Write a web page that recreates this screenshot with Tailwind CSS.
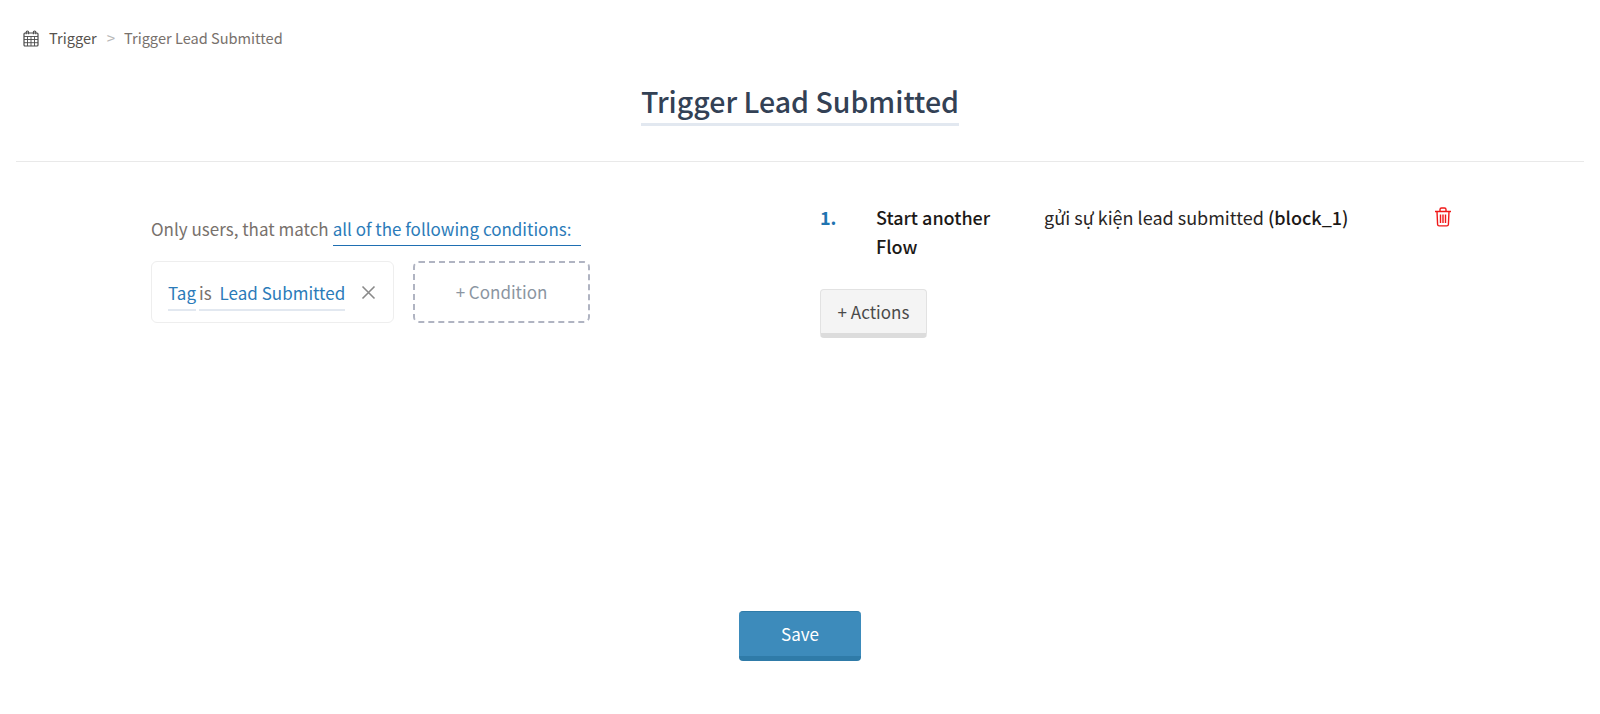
<!DOCTYPE html>
<html lang="en">
<head>
    <meta charset="UTF-8">
    <title>Trigger Lead Submitted</title>
    <script src="https://cdn.jsdelivr.net/npm/@tailwindcss/browser@4"></script>
</head>
<body class="bg-white font-['Noto_Sans_CJK_SC','Noto_Sans',sans-serif]">
    <div class="h-[714px] flex flex-col px-4 overflow-hidden">
        <!-- breadcrumb -->
        <div class="flex items-center h-[24px] mt-[26px] pl-[7px] text-[14.6px]">
            <svg class="w-[16px] h-[17px]" viewBox="0 0 16 17" fill="none" stroke="#4b4b4b" stroke-width="1.2">
                <rect x="1" y="3" width="14" height="13" rx="1"/>
                <path d="M1 6.5h14M1 9.5h14M1 12.7h14M4.5 6.5V16M8 6.5V16M11.5 6.5V16" stroke-width="0.9"/>
                <path d="M3.2 4.2V2.2a1.2 1.2 0 0 1 2.4 0v2M10.4 4.2V2.2a1.2 1.2 0 0 1 2.4 0v2" stroke-width="1.1"/>
            </svg>
            <span class="ml-[10px] text-[#57534e]">Trigger</span>
            <span class="ml-[10px] text-[#b8b8b8] text-[15px]">&gt;</span>
            <span class="ml-[9px] text-[#78716c]">Trigger Lead Submitted</span>
        </div>

        <!-- title -->
        <div class="flex justify-center mt-[29px] pb-[35px] border-b border-[#e9e9e9]">
            <h1 class="text-[28.5px] leading-[44px] font-medium text-[#334155] border-b-[3px] border-[#e2e8f0]">Trigger Lead Submitted</h1>
        </div>

        <div class="flex flex-1">
            <!-- conditions -->
            <div class="w-[804px] pl-[135px] pt-[54px]">
                <div class="flex text-[17px] leading-[26px]">
                    <span class="text-[#78716c]">Only users, that match</span>
                    <span class="ml-[4px] w-[248px] h-[30px] text-[#2b7bb9] border-b border-[#1f6fb2]">all of the following conditions:</span>
                </div>
                <div class="flex mt-[15px] gap-[19px]">
                    <div class="flex items-center w-[243px] h-[62px] pl-[16px] border border-[#eeeeee] rounded-md text-[17px]">
                        <span class="mt-[4px] text-[#2b7bb9] border-b-2 border-[#e2e8f0] h-[34px] leading-[31px]">Tag</span>
                        <span class="mt-[4px] ml-[3px] flex text-[#78716c] border-b-2 border-[#e2e8f0] h-[34px] leading-[31px]">
                            <span>is</span>
                            <span class="ml-[8px] text-[#2b7bb9]">Lead Submitted</span>
                        </span>
                        <svg class="ml-[16px] w-[15px] h-[15px]" viewBox="0 0 15 15" stroke="#8a8a8a" stroke-width="1.6"><path d="M1.5 1.5l12 12M13.5 1.5l-12 12"/></svg>
                    </div>
                    <div class="flex items-center justify-center w-[177px] h-[62px] border-2 border-dashed border-[#b0b4c2] rounded-md text-[17px] text-[#8b95a1]">+ Condition</div>
                </div>
            </div>

            <!-- actions -->
            <div class="flex-1 pt-[41px]">
                <div class="flex text-[18px] leading-[29px]">
                    <span class="w-[56px] font-bold text-[#1f74b0]">1.</span>
                    <span class="w-[168px] font-medium text-[#1c1917]">Start another<br>Flow</span>
                    <span class="w-[390px] text-[#292524]">gửi sự kiện lead submitted <span class="font-medium text-[#1c1917]">(block_1)</span></span>
                    <svg class="w-[18px] h-[20px] mt-[4px]" viewBox="0 0 18 20" fill="none" stroke="#f01818" stroke-width="1.4">
                        <path d="M1 4.5h16M3 4.5l.6 13a1.5 1.5 0 0 0 1.5 1.4h7.8a1.5 1.5 0 0 0 1.5-1.4l.6-13M6 4.5V2.5a1.5 1.5 0 0 1 1.5-1.5h3A1.5 1.5 0 0 1 12 2.5v2M6.5 7.5v8.5M9 7.5v8.5M11.5 7.5v8.5"/>
                    </svg>
                </div>
                <button class="mt-[28px] block w-[107px] h-[49px] bg-[#f4f4f4] border border-[#e2e2e2] border-b-[5px] border-b-[#dcdcdc] rounded-[4px] text-[17px] text-[#4a4a4a]">+ Actions</button>
            </div>
        </div>

        <!-- save -->
        <div class="flex justify-center pb-[53px]">
            <button class="w-[122px] h-[50px] bg-[#3d8bbb] border-t border-t-[#2f7ba8] border-b-[5px] border-b-[#2f7ba8] rounded-[4px] text-[17px] text-white">Save</button>
        </div>
    </div>
</body>
</html>
